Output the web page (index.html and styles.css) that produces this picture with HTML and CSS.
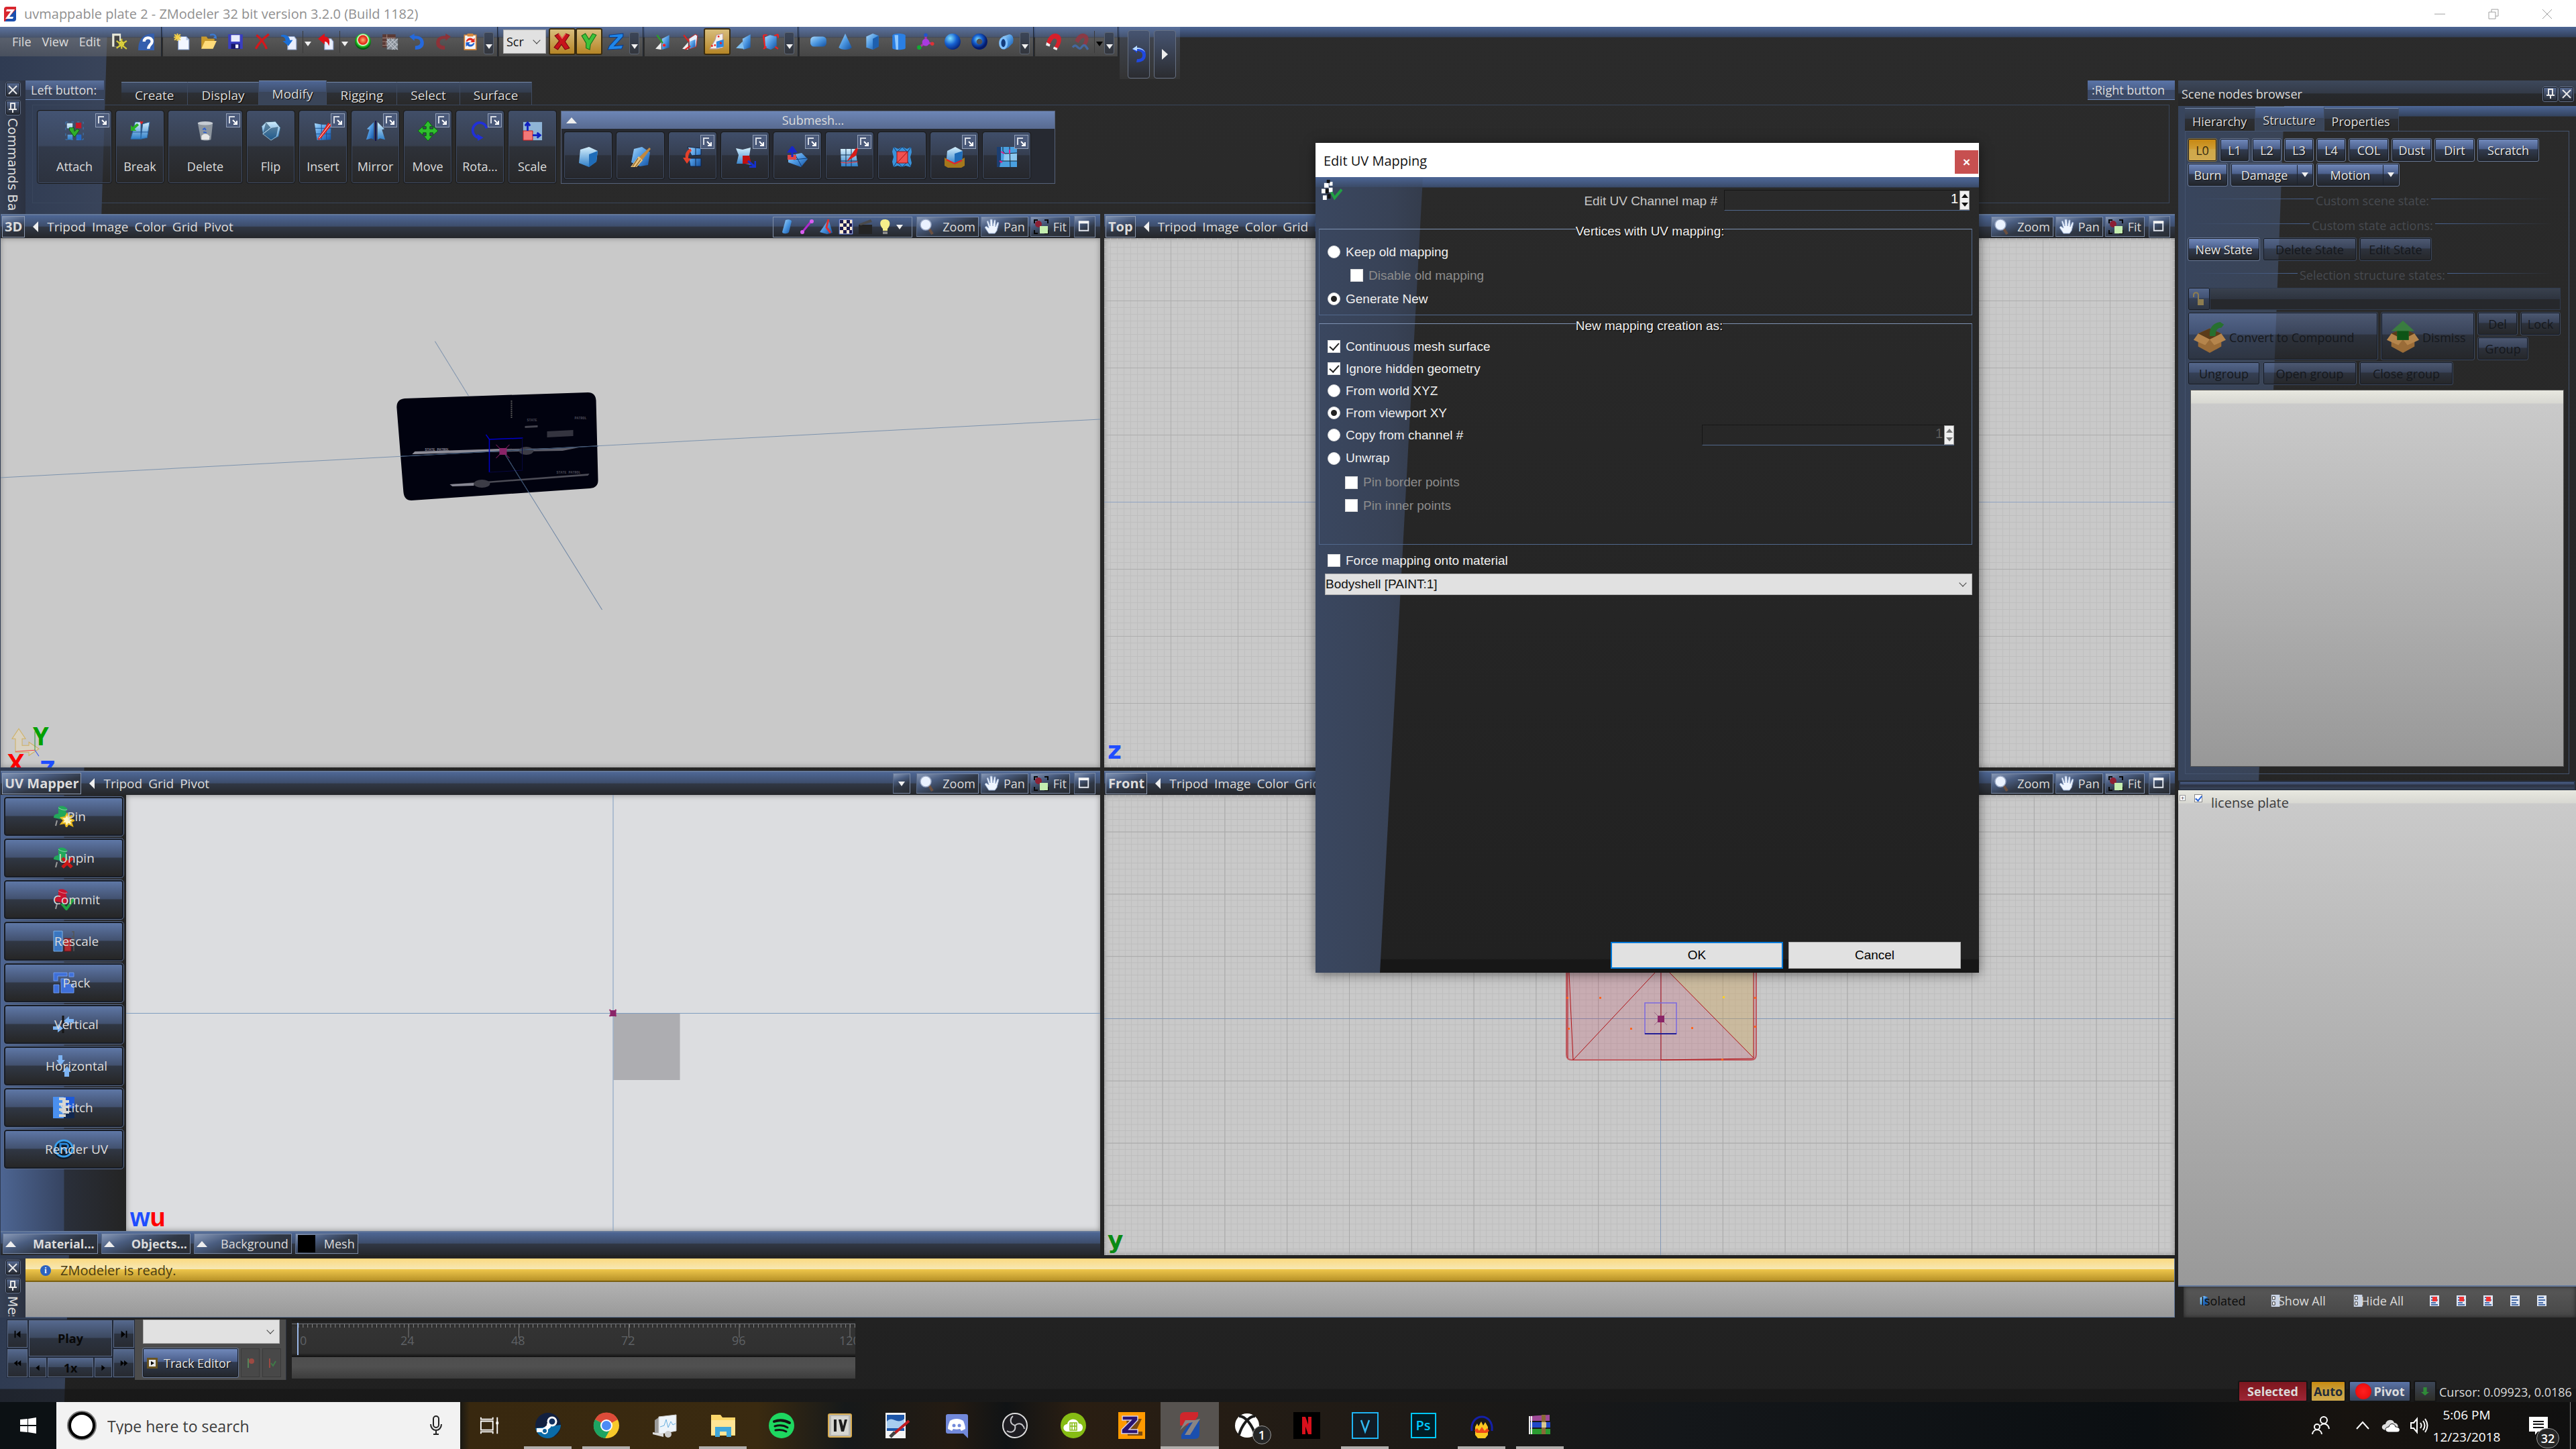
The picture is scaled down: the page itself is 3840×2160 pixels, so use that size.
FILE: index.html
```html
<!DOCTYPE html>
<html lang="en">
<head>
<meta charset="utf-8">
<title>uvmappable plate 2 - ZModeler</title>
<link rel="stylesheet" href="styles.css">
</head>
<body>
<svg class="defs" aria-hidden="true">
<defs>
<linearGradient id="gb" x1="0" y1="0" x2="1" y2="1"><stop offset="0" stop-color="#a8d8fb"/><stop offset=".5" stop-color="#4b96e0"/><stop offset="1" stop-color="#134f9e"/></linearGradient>
<linearGradient id="gl" x1="0" y1="0" x2="0" y2="1"><stop offset="0" stop-color="#d5effc"/><stop offset="1" stop-color="#2f7fc9"/></linearGradient>
<radialGradient id="gs" cx=".35" cy=".3" r=".8"><stop offset="0" stop-color="#7fe0ff"/><stop offset=".5" stop-color="#1660d0"/><stop offset="1" stop-color="#041a6a"/></radialGradient>
<radialGradient id="gball" cx=".5" cy=".4" r=".55"><stop offset="0" stop-color="#ffb070"/><stop offset=".5" stop-color="#e02010"/><stop offset=".6" stop-color="#e8ffe0"/><stop offset=".75" stop-color="#20c020"/><stop offset="1" stop-color="#005a10"/></radialGradient>
</defs>
<symbol id="zlogo" viewBox="0 0 24 24"><path d="M7 1h14v5L8 23H3V5q0-4 4-4z" fill="#d9262e"/><path d="M21 5v14q0 4-4 4H4L20 6z" fill="#1b4fae"/><path d="M7 5h12l-8 11h6l-1 3H5l8-11H6z" fill="#fff"/></symbol>
<symbol id="exit" viewBox="0 0 24 24"><path d="M2 1h12v18H2z" fill="#e8e8d8"/><path d="M5 4h7v15H5z" fill="#444"/><circle cx="15" cy="15" r="4" fill="#e6dc50" stroke="#6a6410"/><path d="M8 11l14 11M8 21l14-10M15 8v14" stroke="#d8cc3a" stroke-width="2"/></symbol>
<symbol id="help" viewBox="0 0 24 24"><path d="M1 24C1 8 8 1 23 1v23z" fill="#345fae"/><path d="M9 12c0-7 11-7 11 0 0 4-5 4-5 10" fill="none" stroke="#fff" stroke-width="4"/></symbol>
<symbol id="new" viewBox="0 0 24 24"><path d="M7 5h11l4 4v14H7z" fill="#f2f6ff" stroke="#7a93c4"/><path d="M18 5v5h4" fill="#b6c8e8"/><path d="M6 1v10M1 6h10M2 2l8 8M10 2l-8 8" stroke="#f4d048" stroke-width="2"/></symbol>
<symbol id="open" viewBox="0 0 24 24"><path d="M2 22V5h7l2 3h9v5" fill="#c99a2c"/><path d="M2 22l5-11h16l-5 11z" fill="#ffdc7a"/><path d="M14 3c5-2 8 0 8 4l-3-1" fill="none" stroke="#3a7bd5" stroke-width="2"/></symbol>
<symbol id="save" viewBox="0 0 24 24"><path d="M2 2h20v20H2z" fill="#3a3fc0"/><path d="M6 3h12v9H6z" fill="#e8ecfa"/><path d="M6 15h12v7H6z" fill="#16186a"/><path d="M12 16h4v5h-4z" fill="#fff"/></symbol>
<symbol id="del" viewBox="0 0 24 24"><path d="M4 3c6 5 11 11 14 19M21 2C13 8 7 14 3 22" fill="none" stroke="#d3181c" stroke-width="3"/></symbol>
<symbol id="import" viewBox="0 0 24 24"><path d="M10 5h9l3 4v14H10z" fill="#e8eefc" stroke="#8ea3cc"/><path d="M1 3c6-2 12 2 12 7h4l-6 8-8-7h4C7 7 5 5 1 5z" fill="#1c6fd6"/></symbol>
<symbol id="export" viewBox="0 0 24 24"><path d="M10 8h9l3 4v11H10z" fill="#e8eefc" stroke="#8ea3cc"/><path d="M1 8l9-7v4c6 0 8 5 6 13-2-5-3-6-6-6v4z" fill="#e01018"/></symbol>
<symbol id="ball" viewBox="0 0 24 24"><circle cx="12" cy="12" r="11" fill="url(#gball)"/></symbol>
<symbol id="wall" viewBox="0 0 24 24"><path d="M2 2h18v18H2z" fill="#5b3a35"/><path d="M2 7h18M2 12h18M2 17h18M8 2v5M14 7v5M7 12v5" stroke="#9a8078"/><path d="M8 8h15v15H8z" fill="#808890"/><path d="M8 12l4-4M8 18L18 8M9 22L23 8M15 23l8-8M8 12l11 11M8 8l15 15M14 8l9 9" stroke="#b8bec6" stroke-width="1.3"/></symbol>
<symbol id="undo" viewBox="0 0 24 24"><path d="M2 5l7-4v3c9 0 13 4 13 10s-5 9-12 9v-5c5 0 7-2 7-5 0-4-3-5-8-5v3z" fill="#2569dc"/></symbol>
<symbol id="undo2" viewBox="0 0 24 28"><path d="M2 6l7-5v3c9 0 13 4 13 11s-5 11-14 11l1-5c6 0 8-2 8-6s-3-6-8-6v3z" fill="#2048e0"/><path d="M2 6l7-5v3c6 0 10 3 12 7-3-4-7-5-12-5v3z" fill="#b8dcff"/></symbol>
<symbol id="redo" viewBox="0 0 24 24"><path d="M22 5l-7-4v3C6 4 2 8 2 14s5 9 12 9v-5c-5 0-7-2-7-5 0-4 3-5 8-5v3z" fill="#8c3238"/></symbol>
<symbol id="refresh" viewBox="0 0 24 24"><path d="M4 3h16v20H4z" fill="#f4f4f4" stroke="#d8893c" stroke-width="1.5"/><path d="M8 1h8v4H8z" fill="#d8893c"/><path d="M6 12c2-6 8-6 10-3l2-2v6h-6l2-2c-2-2-5-1-6 1z" fill="#e02a20"/><path d="M18 14c-2 6-8 6-10 3l-2 2v-6h6l-2 2c2 2 5 1 6-1z" fill="#2060d0"/></symbol>
<symbol id="ax" viewBox="0 0 24 24"><path d="M2 4l5-3 5 7 5-7 5 2-6 9 6 9-6 2-5-7-5 7-5-3 7-9z" fill="#c8141c" stroke="#7a0810"/><path d="M7 1l5 7 5-7" fill="none" stroke="#ff6a60"/></symbol>
<symbol id="ay" viewBox="0 0 24 24"><path d="M2 4l5-3 5 8 5-8 5 2-8 13-1 7-5-2v-7z" fill="#3fc23a" stroke="#157018"/></symbol>
<symbol id="az" viewBox="0 0 24 24"><path d="M3 3l19-2v4L10 18l12-1-2 5-19 1 2-5L14 6H3z" fill="#1f86ea" stroke="#0a3c8c"/></symbol>
<symbol id="mv" viewBox="0 0 24 24"><path d="M10 8l10-5v17l-10 3z" fill="url(#gb)"/><path d="M1 22l8-9v10z" fill="#eee"/><path d="M3 3l8 11" stroke="#2aa02a" stroke-width="2"/><circle cx="13" cy="17" r="2" fill="#f22"/></symbol>
<symbol id="me" viewBox="0 0 24 24"><path d="M10 8l9-6 3 2-2 15-9 3z" fill="#e7f1fb" stroke="#b33"/><path d="M11 12l8-3v10l-8 3z" fill="url(#gb)"/><path d="M1 22l8-9v10z" fill="#eee"/><path d="M3 3l7 9M5 23l7-5" stroke="#d22" stroke-width="2"/></symbol>
<symbol id="mf" viewBox="0 0 24 24"><path d="M9 10l2-7 9-2v19l-8 2H2z" fill="#f4f0ec" stroke="#b99"/><path d="M11 12l10-3v10l-10 2z" fill="#2f86dd"/><g fill="#e22"><circle cx="14" cy="5" r="1.3"/><circle cx="17" cy="14" r="1.5"/><circle cx="5" cy="18" r="1.3"/><circle cx="9" cy="17" r="1.3"/></g></symbol>
<symbol id="mo" viewBox="0 0 24 24"><path d="M10 8l11-6v18l-10 3z" fill="url(#gb)"/><path d="M1 21l9-9 2 10z" fill="#7fc0f2"/></symbol>
<symbol id="mb" viewBox="0 0 24 24"><path d="M4 6l7-3 9 2v14l-8 4-8-3z" fill="url(#gb)"/><path d="M2 3h5M2 3v5M22 2l-5 2M22 2v5M2 22l4-3M22 22l-4-3M2 4l2 16" stroke="#e22" stroke-width="2" fill="none"/></symbol>
<symbol id="pbox" viewBox="0 0 24 24"><rect x="1" y="5" width="22" height="14" rx="5" fill="url(#gb)"/></symbol>
<symbol id="pcone" viewBox="0 0 24 24"><path d="M12 1l9 19c-4 4-14 4-18 0z" fill="url(#gb)"/></symbol>
<symbol id="pcube" viewBox="0 0 24 24"><path d="M4 5l9-4 8 3v15l-8 4-9-3z" fill="url(#gb)"/><path d="M13 8l8-4v15l-8 4z" fill="#1d5fae"/></symbol>
<symbol id="pcyl" viewBox="0 0 24 24"><path d="M3 4c0-4 18-4 18 0v17c0 3-18 3-18 0z" fill="#2a7fe4"/><path d="M6 3h5v20H8z" fill="#8fc8ff"/></symbol>
<symbol id="pdummy" viewBox="0 0 24 24"><path d="M12 13V3M12 13l-9 7M12 13l9 2" stroke="#a3a" stroke-width="3"/><circle cx="12" cy="13" r="5" fill="#a93ae0"/><circle cx="12" cy="3" r="2.500" fill="#25c"/><circle cx="3" cy="20" r="3" fill="#1a3"/><circle cx="21" cy="15" r="2.500" fill="#d33"/></symbol>
<symbol id="psph" viewBox="0 0 24 24"><circle cx="12" cy="12" r="11" fill="url(#gs)"/></symbol>
<symbol id="ptor" viewBox="0 0 24 24"><circle cx="12" cy="12" r="7.500" fill="none" stroke="url(#gs)" stroke-width="7"/></symbol>
<symbol id="ptube" viewBox="0 0 24 24"><path d="M7 5l9-3c5 0 7 6 5 12l-6 6-6 3z" fill="url(#gb)"/><ellipse cx="8" cy="14" rx="4.500" ry="7" fill="#123a7a" stroke="#7fc0ff" stroke-width="3"/></symbol>
<symbol id="mag" viewBox="0 0 24 24"><path d="M2 13C5 3 12-1 18 2s5 12-1 20l-5-2c5-7 5-11 2-12s-5 3-8 9z" fill="#d8202a"/><path d="M2 13l-1 4 5 2 1-3zM12 19l5 2-1 3-5-2z" fill="#eee"/></symbol>
<symbol id="mag2" viewBox="0 0 24 24"><path d="M4 11C7 3 13-1 19 2s4 11-1 17l-4-2c4-6 4-9 2-10s-5 3-7 7z" fill="#8a3a46"/><path d="M1 20c5-8 8 6 12 0s6-2 9 3" fill="none" stroke="#45689e" stroke-width="3"/></symbol>
<symbol id="popup" viewBox="0 0 21 21"><rect x=".5" y=".5" width="20" height="20" fill="#4b5a7a" stroke="#93a0b8"/><path d="M5 15V5h8" fill="none" stroke="#d8dce4" stroke-width="2"/><path d="M10 10l6 6M16 11v5h-5" fill="none" stroke="#fff" stroke-width="2"/></symbol>
<symbol id="c1" viewBox="0 0 32 32"><path d="M4 4h9v8H4zM5 22h8v8H5z" fill="url(#gl)"/><path d="M18 3h9v9h-9z" fill="#c01828"/><path d="M19 22h8v9h-8z" fill="#2468c8"/><path d="M8 11h7l1 6 4-4 4 2-8 11-8-11z" fill="#2fae2a" stroke="#0c5a10"/><path d="M2 2h28v28H2z" fill="none" stroke="#3d7fc0" stroke-dasharray="4 5"/></symbol>
<symbol id="c2" viewBox="0 0 32 32"><path d="M8 2h9v27H1z" fill="url(#gl)" stroke="#2a6aa8"/><path d="M20 5l11-3-4 25-10 2z" fill="url(#gl)" stroke="#2a6aa8"/><path d="M3 18h26" stroke="#1b4f90"/><path d="M14 7L7 13l3 3H1V7l3 3 7-6z" fill="#28b024"/><path d="M16 1l2 3 2-3" stroke="#e22" stroke-width="2" fill="none"/></symbol>
<symbol id="c3" viewBox="0 0 32 32"><path d="M4 3h24l-3 27c-5 2-11 2-16 0z" fill="#8e969f"/><ellipse cx="16" cy="4" rx="12" ry="3" fill="#c6ccd3"/><path d="M10 24c4-5 10-4 13 1l-1 5H10z" fill="#e6e6e6"/><path d="M12 14l3-2 2 3M13 18l5 1" stroke="#2a5fd0" stroke-width="2" fill="none"/></symbol>
<symbol id="c4" viewBox="0 0 32 32"><path d="M8 2l15-1 8 10-3 14-12 6L3 21 1 9z" fill="url(#gl)" stroke="#33556e"/><path d="M16 11l12-2-3 16-9 6L3 21zM8 2l8 9L3 21" fill="#123a5a" fill-opacity=".55" stroke="#cfe8f6" stroke-opacity=".7"/></symbol>
<symbol id="c5" viewBox="0 0 32 32"><path d="M2 4l12 2h14v24L6 31z" fill="url(#gb)"/><path d="M3 12h25M4 21h24M13 4v26M21 5v25" stroke="#1a4d8c"/><path d="M8 30L25 4M11 27L28 6" stroke="#e0221c" stroke-width="3"/><path d="M9 28L27 5" stroke="#fff"/></symbol>
<symbol id="c6" viewBox="0 0 32 32"><path d="M13 2v28l-4-2-8 2 5-16-4-1z" fill="url(#gb)"/><path d="M19 2v28l4-2 8 2-5-16 4-1z" fill="url(#gl)"/><path d="M16 0v32" stroke="#101050" stroke-width="2"/></symbol>
<symbol id="c7" viewBox="0 0 32 32"><path d="M16 0l7 9h-4v4h5V9l8 7-8 7v-4h-5v5h4l-7 8-7-8h4v-5H8v4l-8-7 8-7v4h5V9H9z" fill="#2ec02c" stroke="#0a5c10"/></symbol>
<symbol id="c8" viewBox="0 0 32 32"><path d="M26 12C24 3 13 0 7 7s-3 17 6 20" fill="none" stroke="#2030d8" stroke-width="4"/><path d="M11 21l10 6-9 5z" fill="#2030d8"/></symbol>
<symbol id="c9" viewBox="0 0 32 32"><path d="M1 2h30v29H1z" fill="#8fb4d6"/><path d="M1 16h15v15H1z" fill="#f27878" stroke="#c01818"/><path d="M8 16V5M4 8l4-5 4 5M16 23h10M23 19l5 4-5 4" fill="none" stroke="#1020c0" stroke-width="3"/></symbol>
<symbol id="s1" viewBox="0 0 32 32"><path d="M4 5l13-4 13 6-2 16-11 8L2 25z" fill="url(#gl)"/><path d="M17 12l13-5-2 16-11 8z" fill="#1f6cb8"/></symbol>
<symbol id="s2" viewBox="0 0 32 32"><path d="M6 4l12-3 12 8-3 19-12 2L2 24z" fill="url(#gb)"/><path d="M29 2l2 2-13 17-5-4z" fill="#c08840"/><path d="M13 15l6 6-9 10H1z" fill="#e8c078"/><path d="M12 18L4 30M16 20l-8 11" stroke="#5a3810"/></symbol>
<symbol id="s3" viewBox="0 0 32 32"><path d="M8 1l20 2v10l-14 1zM10 18h18v12H12z" fill="url(#gb)" stroke="#124"/><path d="M12 3C5 8 4 12 5 17H1l6 9 6-8H9c0-6 2-9 5-11z" fill="#e4402a"/><path d="M20 3v10M20 18v12" stroke="#124"/></symbol>
<symbol id="s4" viewBox="0 0 32 32"><path d="M2 3l10 2 12-3-2 12 2 14-8-2H3l3-13z" fill="url(#gl)"/><path d="M12 14h10l3 12H12z" fill="#c01010"/><path d="M20 22l11 9M31 22v9h-9" stroke="#1530d0" stroke-width="3" fill="none"/></symbol>
<symbol id="s5" viewBox="0 0 32 32"><path d="M2 14l20-4 9 9-10 12L2 24z" fill="url(#gb)"/><path d="M10 20l20-2M12 12l10 18" stroke="#0f3c78"/><path d="M1 13h13v7H1z" fill="#e04848"/><path d="M8 16V6M3 8l5-7 5 7z" stroke="#1828c8" stroke-width="3" fill="#1828c8"/></symbol>
<symbol id="s6" viewBox="0 0 32 32"><path d="M2 4h22l4 26H3z" fill="url(#gl)"/><path d="M2 13h24M2 22h25M10 4v26M18 4v26" stroke="#135"/><path d="M24 4l5-3-4 13-14 9z" fill="#d81c18"/><path d="M2 24l10 1 16-2" stroke="#e22" fill="none"/></symbol>
<symbol id="s7" viewBox="0 0 32 32"><path d="M3 1l7 3 6-3 7 3 6-3 1 8-2 7 2 9-2 6-7-2-5 2-7-2-6 2-2-8 2-7-2-8z" fill="#3a92da"/><path d="M3 1l5 8 8-8 8 8 5-8M3 31l5-8 8 8 8-8 5 8" stroke="#123c70" fill="none"/><path d="M8 8h16v17H8z" fill="#f05050" stroke="#a01010"/><path d="M8 25L24 8" stroke="#a01010"/></symbol>
<symbol id="s8" viewBox="0 0 32 32"><path d="M1 17l15 8 15-8v12l-5 3H6l-5-3z" fill="#a5781c"/><path d="M5 7l12-6 11 6-1 15-11 5L4 19z" fill="url(#gl)"/><path d="M16 11l12-4-1 15-11 5z" fill="#1f6cb8"/><path d="M4 20l12 6 11-5" stroke="#e22" stroke-width="2" fill="none"/></symbol>
<symbol id="s9" viewBox="0 0 32 32"><path d="M1 1h30v30H1z" fill="#4aa0e0"/><path d="M1 1h6v21l-2 9H1z" fill="#1c3f72"/><path d="M12 11l19-1v12H11z" fill="#8cc8f0"/><path d="M10 1v6l3 4 18-1M20 1l1 30M7 22h24" stroke="#123" fill="none"/><path d="M7 8l5 3M5 22l4 2M20 5v6" stroke="#e0208a" stroke-width="2"/></symbol>
<symbol id="v1" viewBox="0 0 24 24"><path d="M9 2c5-2 9 0 9 2l-4 16c-2 3-9 3-10 0z" fill="url(#gb)"/></symbol>
<symbol id="v2" viewBox="0 0 24 24"><path d="M5 20L19 3" stroke="#b02ad0" stroke-width="3"/><circle cx="19" cy="4" r="3" fill="#d860f0"/><circle cx="5" cy="20" r="3" fill="#d860f0"/></symbol>
<symbol id="v3" viewBox="0 0 24 24"><path d="M15 1l6 20-8 2-11-3z" fill="url(#gb)"/><path d="M15 1l-3 12 6 8" stroke="#e03030" stroke-width="3" fill="none"/></symbol>
<symbol id="v4" viewBox="0 0 24 24"><path d="M2 1h20v22H2z" fill="#f8e8d0" stroke="#3a5ac0"/><path d="M3 2h5v5H3zM13 2h5v5h-5zM8 7h5v5H8zM17 7h4v5h-4zM3 12h5v5H3zM13 12h5v5h-5zM8 17h5v5H8zM17 17h4v5h-4z" fill="#1c1a50"/></symbol>
<symbol id="v5" viewBox="0 0 24 24"><path d="M2 9h20v14H2z" fill="#242424"/><path d="M2 8l18-7 2 4-17 5z" fill="#4a4a4a"/></symbol>
<symbol id="v6" viewBox="0 0 24 24"><path d="M12 1c9 0 9 9 4 14v3H9v-3C3 9 4 1 12 1z" fill="#f5ee8a"/><path d="M9 19h7v4H9z" fill="#888"/></symbol>
<symbol id="zoom" viewBox="0 0 24 24"><path d="M15 15l5 8" stroke="#6b5040" stroke-width="4"/><circle cx="10" cy="9" r="8" fill="#eaf2ff" stroke="#9aa8c4" stroke-width="1.500"/></symbol>
<symbol id="hand" viewBox="0 0 24 24"><path d="M8 22l-6-9 2-2 4 3L5 4l2-1 3 8V1h3l1 10 2-9h2v10l3-7 2 1-3 12-3 4z" fill="#eef5ff" stroke="#8fa4c8"/></symbol>
<symbol id="fit" viewBox="0 0 24 24"><path d="M2 7V2h5M17 2h5v5M2 17v5h5M17 22h5v-5" stroke="#080808" stroke-width="2" fill="none"/><circle cx="8" cy="8" r="5" fill="#8c2034"/><path d="M10 11h12v11H10z" fill="#c4eeb0"/></symbol>
<symbol id="max" viewBox="0 0 24 24"><path d="M4 4h14v14H4z" fill="none" stroke="#e4e8f0" stroke-width="2"/><path d="M3 3h16v4H3z" fill="#f4f4f4"/></symbol>
<symbol id="pin" viewBox="0 0 32 32"><path d="M8 2c4-3 12-1 14 4l-3 1 2 8c2 3 1 6-1 7L1 18c0-4 3-6 7-6V6z" fill="currentColor"/><path d="M8 3c4 3 9 4 13 3" stroke="#fff" stroke-opacity=".5" fill="none"/><path d="M6 22l-2 8" stroke="#999" stroke-width="2"/></symbol>
<symbol id="u1" viewBox="0 0 32 32"><use href="#pin" color="#22a85a"/><path d="M21 12l2 5 5-2-2 5 6 2-5 2 2 6-6-3-3 5-2-6-6 1 4-5-4-4 6-1z" fill="#fff6c0" stroke="#e8b81c" stroke-width="2"/></symbol>
<symbol id="u2" viewBox="0 0 32 32"><use href="#pin" color="#22a85a"/><path d="M14 16l14 14M29 16L14 30" stroke="#cc1818" stroke-width="5"/></symbol>
<symbol id="u3" viewBox="0 0 32 32"><use href="#pin" color="#c81430"/><path d="M13 22l7 8L31 15" stroke="#20a440" stroke-width="4" fill="none"/></symbol>
<symbol id="u4" viewBox="0 0 32 32"><path d="M1 1h13v30H1z" fill="#3a76c0" stroke="#79b0ea"/><path d="M17 12h10v19H17z" fill="#b02a30" stroke="#681016"/><path d="M31 1v30M28 2h3M28 9h3M28 16h3M28 23h3" stroke="#555" stroke-width="1.500"/></symbol>
<symbol id="u5" viewBox="0 0 32 32"><path d="M1 1h20v5H7v7H1zM24 1h7v6h-7zM1 19h8v12H1zM12 10h9v8h10v13H12z" fill="#3f70d8" stroke="#6c98f0"/></symbol>
<symbol id="u6" viewBox="0 0 32 32"><path d="M15 3v26" stroke="#151515" stroke-width="3"/><path d="M31 8H24V4l-8 7 8 6v-4h7zM0 19h7v-4l8 7-8 6v-4H0z" fill="#7db4f4"/></symbol>
<symbol id="u7" viewBox="0 0 32 32"><path d="M8 0h6v7h4l-7 9-6-9h3zM17 32h7v-7h3l-6-9-7 9h3z" fill="#7db4f4"/></symbol>
<symbol id="u8" viewBox="0 0 32 32"><path d="M0 0h16v32H0z" fill="#4a90f0"/><path d="M16 0h16v17H16z" fill="#1f5ad8"/><path d="M16 17h16v15H16z" fill="#12284f"/><path d="M9 3h10M14 7h10M9 11h10M14 15h10M9 19h10M14 23h10M9 28h10" stroke="#d5d5d0" stroke-width="4"/></symbol>
<symbol id="u9" viewBox="0 0 32 32"><ellipse cx="16" cy="17" rx="15" ry="14" fill="#0d1c2c"/><ellipse cx="16" cy="15" rx="13" ry="12" fill="none" stroke="#3aa0ee" stroke-width="3"/><path d="M11 22V8h7c6 0 6 7 0 7h-7 5l6 7" fill="none" stroke="#2a86d8" stroke-width="3"/></symbol>
<symbol id="crate" viewBox="0 0 52 52"><path d="M8 20l18-8 18 8v20l-18 10L8 40z" fill="#9a6c38"/><path d="M8 20l18 9 18-9-18-8z" fill="#5a3c1a"/><path d="M8 20l-7 10 18 8 7-9zM44 20l7 10-18 8-7-9z" fill="#b5854c"/></symbol>
<symbol id="crate1" viewBox="0 0 52 52"><use href="#crate"/><path d="M26 24c-1-12 4-20 16-22l6 4-4 5c-6 0-9 4-9 13z" fill="#27702f"/></symbol>
<symbol id="crate2" viewBox="0 0 52 52"><use href="#crate"/><path d="M17 30V16H8L26 0l18 16h-9v14z" fill="#3a7c40"/><path d="M17 30V16h18v14z" fill="#0e5416"/></symbol>
<symbol id="lock" viewBox="0 0 24 24"><path d="M10 12h9v9h-9z" fill="#8c7c50"/><path d="M11 12V6c0-5-7-5-7 0v3" fill="none" stroke="#8c7c50" stroke-width="2"/></symbol>
<symbol id="list" viewBox="0 0 16 18"><path d="M1 1h14v16H1z" fill="#dfe6f2"/><path d="M3 4h8M3 8h10M3 12h7M3 15h10" stroke="#4a6ea8" stroke-width="2"/></symbol>
<symbol id="chk" viewBox="0 0 16 20"><path d="M0 0h14v20H0z" fill="#c9d4e6"/><path d="M2 3h4v5H2zM2 12h4v5H2z" fill="#fff" stroke="#222"/></symbol>
<symbol id="people" viewBox="0 0 28 28"><g fill="none" stroke="#fff" stroke-width="2"><circle cx="18" cy="6" r="5"/><circle cx="8" cy="16" r="4"/><path d="M1 27c1-9 13-9 14 0M13 14c5-5 12-2 13 5"/></g></symbol>
</svg>

<div class="app">
<header class="titlebar"><svg class="i24"><use href="#zlogo"/></svg><h1>uvmappable plate 2 - ZModeler 32 bit version 3.2.0 (Build 1182)</h1>
<div class="winctl"><button aria-label="Minimize"><svg viewBox="0 0 16 16"><path d="M0 8h16"/></svg></button><button aria-label="Restore"><svg viewBox="0 0 16 16"><path d="M1 5h10v10H1zM5 5V1h10v10h-4"/></svg></button><button aria-label="Close"><svg viewBox="0 0 16 16"><path d="M1 1l14 14M15 1L1 15"/></svg></button></div></header>

<div class="work">
<nav class="toolbars" aria-label="Toolbars">
<div class="tg menus"><button>File</button><button>View</button><button>Edit</button><button class="tb" aria-label="Exit"><svg><use href="#exit"/></svg></button><button class="tb" aria-label="Help"><svg><use href="#help"/></svg></button></div>
<div class="tg"><button class="tb" aria-label="New"><svg><use href="#new"/></svg></button><button class="tb" aria-label="Open"><svg><use href="#open"/></svg></button><button class="tb" aria-label="Save"><svg><use href="#save"/></svg></button><button class="tb" aria-label="Delete"><svg><use href="#del"/></svg></button><button class="tb" aria-label="Import"><svg><use href="#import"/></svg></button><button class="dd" aria-label="Import options"></button><button class="tb" aria-label="Export"><svg><use href="#export"/></svg></button><button class="dd" aria-label="Export options"></button><button class="tb" aria-label="Materials"><svg><use href="#ball"/></svg></button><button class="tb" aria-label="Textures"><svg><use href="#wall"/></svg></button><button class="tb" aria-label="Undo"><svg><use href="#undo"/></svg></button><button class="tb" aria-label="Redo"><svg><use href="#redo"/></svg></button><button class="tb" aria-label="Refresh"><svg><use href="#refresh"/></svg></button><button class="more" aria-label="More"></button></div>
<div class="tg"><div class="combo scr"><select aria-label="Axes space"><option>Scr</option></select></div><button class="tb on" aria-label="X axis"><svg><use href="#ax"/></svg></button><button class="tb on" aria-label="Y axis"><svg><use href="#ay"/></svg></button><button class="tb" aria-label="Z axis"><svg><use href="#az"/></svg></button><button class="more" aria-label="More"></button></div>
<div class="tg"><button class="tb" aria-label="Vertices"><svg><use href="#mv"/></svg></button><button class="tb" aria-label="Edges"><svg><use href="#me"/></svg></button><button class="tb on" aria-label="Polygons"><svg><use href="#mf"/></svg></button><button class="tb" aria-label="Objects"><svg><use href="#mo"/></svg></button><button class="tb" aria-label="Bounds"><svg><use href="#mb"/></svg></button><button class="more" aria-label="More"></button></div>
<div class="tg"><button class="tb" aria-label="Box"><svg><use href="#pbox"/></svg></button><button class="tb" aria-label="Cone"><svg><use href="#pcone"/></svg></button><button class="tb" aria-label="Cube"><svg><use href="#pcube"/></svg></button><button class="tb" aria-label="Cylinder"><svg><use href="#pcyl"/></svg></button><button class="tb" aria-label="Dummy"><svg><use href="#pdummy"/></svg></button><button class="tb" aria-label="Sphere"><svg><use href="#psph"/></svg></button><button class="tb" aria-label="Torus"><svg><use href="#ptor"/></svg></button><button class="tb" aria-label="Tube"><svg><use href="#ptube"/></svg></button><button class="more" aria-label="More"></button></div>
<div class="tg"><button class="tb" aria-label="Magnet"><svg><use href="#mag"/></svg></button><button class="tb" aria-label="Soft magnet"><svg><use href="#mag2"/></svg></button><button class="dd black" aria-label="Magnet options"></button><button class="more" aria-label="More"></button></div>
<div class="tg tall"><button class="tbtall" aria-label="Undo last"><svg><use href="#undo2"/></svg></button><button class="tbtall" aria-label="Repeat"><span class="tri-r"></span></button></div>
</nav>

<main class="center">
<section class="cmdbar">
<div class="vstrip"><button class="sq" aria-label="Close"><svg viewBox="0 0 16 16"><path d="M2 2l12 12M14 2L2 14"/></svg></button><button class="sq" aria-label="Pin"><svg viewBox="0 0 16 16"><path d="M5 1h6v9H5zM2 10h12M8 10v5"/></svg></button><span class="vtext">Commands Ba</span></div>
<div class="cmdmain">
<div class="tabrow"><span class="mbtn">Left button:</span><div class="tabs"><button class="tab">Create</button><button class="tab">Display</button><button class="tab sel">Modify</button><button class="tab">Rigging</button><button class="tab">Select</button><button class="tab">Surface</button></div><span class="mbtn right">:Right button</span></div>
<div class="cmdpanel">
<button class="cmd wide"><svg class="ci"><use href="#c1"/></svg><svg class="pop"><use href="#popup"/></svg>Attach</button>
<button class="cmd"><svg class="ci"><use href="#c2"/></svg>Break</button>
<button class="cmd wide"><svg class="ci"><use href="#c3"/></svg><svg class="pop"><use href="#popup"/></svg>Delete</button>
<button class="cmd"><svg class="ci"><use href="#c4"/></svg>Flip</button>
<button class="cmd"><svg class="ci"><use href="#c5"/></svg><svg class="pop"><use href="#popup"/></svg>Insert</button>
<button class="cmd"><svg class="ci"><use href="#c6"/></svg><svg class="pop"><use href="#popup"/></svg>Mirror</button>
<button class="cmd"><svg class="ci"><use href="#c7"/></svg><svg class="pop"><use href="#popup"/></svg>Move</button>
<button class="cmd"><svg class="ci"><use href="#c8"/></svg><svg class="pop"><use href="#popup"/></svg>Rota...</button>
<button class="cmd"><svg class="ci"><use href="#c9"/></svg>Scale</button>
<div class="submesh"><div class="subhead"><span class="tri-u"></span><span class="subt">Submesh...</span></div><div class="subrow">
<button class="cmd sm" aria-label="Solid"><svg class="ci"><use href="#s1"/></svg></button>
<button class="cmd sm" aria-label="Clean"><svg class="ci"><use href="#s2"/></svg></button>
<button class="cmd sm" aria-label="Detach"><svg class="ci"><use href="#s3"/></svg><svg class="pop"><use href="#popup"/></svg></button>
<button class="cmd sm" aria-label="Bevel"><svg class="ci"><use href="#s4"/></svg><svg class="pop"><use href="#popup"/></svg></button>
<button class="cmd sm" aria-label="Extrude"><svg class="ci"><use href="#s5"/></svg><svg class="pop"><use href="#popup"/></svg></button>
<button class="cmd sm" aria-label="Cut"><svg class="ci"><use href="#s6"/></svg><svg class="pop"><use href="#popup"/></svg></button>
<button class="cmd sm" aria-label="Inset"><svg class="ci"><use href="#s7"/></svg></button>
<button class="cmd sm" aria-label="Slice"><svg class="ci"><use href="#s8"/></svg><svg class="pop"><use href="#popup"/></svg></button>
<button class="cmd sm" aria-label="Weld"><svg class="ci"><use href="#s9"/></svg><svg class="pop"><use href="#popup"/></svg></button>
</div></div>
</div></div>
</section>

<div class="views">
<section class="view">
<header class="vhead"><button class="vname">3D</button><div class="vmenu"><span class="tri-l"></span><button>Tripod</button><button>Image</button><button>Color</button><button>Grid</button><button>Pivot</button></div>
<div class="vicons"><svg><use href="#v1"/></svg><svg><use href="#v2"/></svg><svg><use href="#v3"/></svg><svg><use href="#v4"/></svg><svg><use href="#v5"/></svg><svg><use href="#v6"/></svg><span class="tri-d"></span></div>
<div class="vtools"><button class="vb vz"><svg><use href="#zoom"/></svg>Zoom</button><button class="vb"><svg><use href="#hand"/></svg>Pan</button><button class="vb"><svg><use href="#fit"/></svg>Fit</button><button class="vb vmax" aria-label="Maximize"><svg><use href="#max"/></svg></button></div></header>
<div class="canvas">
<svg class="scene" viewBox="0 0 1638 789" preserveAspectRatio="xMidYMid slice">
<path d="M647 154l50 81" stroke="#7f93ad" fill="none"/>
<path d="M590 252q0-12 12-13l273-9q11 0 12 12l3 119q0 11-12 12l-266 18q-11 0-12-13z" fill="#01020f"/>
<path d="M614 322l3-3 140-5 70-1 40-2-30 6-170 3z" fill="#5d5d68"/><path d="M613 322l4-4 132-4v4z" fill="#8d8d98"/>
<path d="M669 367l208-16-2 3-202 15z" fill="#4c4c56"/><path d="M669 367l36-2v4l-32 1z" fill="#888894"/>
<ellipse cx="783" cy="317" rx="11" ry="6" fill="#3c3c46"/><ellipse cx="717" cy="366" rx="12" ry="6" fill="#3c3c46"/>
<path d="M814 288l39-2v9l-39 2z" fill="#34343f"/><path d="M781 280l19-1v3l-19 1z" fill="#44444f"/>
<path d="M761 242v27" stroke="#555" stroke-width="2" stroke-dasharray="2 1"/>
<g class="platetext"><text x="632" y="317">STATE PATROL</text><text class="dim" x="828" y="351">STATE PATROL</text><text class="dim" x="784" y="273">STATE</text><text class="dim" x="855" y="270">PATROL</text></g>
<path d="M0 357l1638-87" stroke="#7d93ad" fill="none"/>
<path d="M597 325l293-15" stroke="#2c415f" fill="none"/>
<path d="M728 349v-49l50-2M728 300l-5-7" stroke="#0000c8" stroke-width="1.500" fill="none"/><path d="M777 298v47M728 349l50-3" stroke="#080840" fill="none"/>
<path d="M750 320l146 234" stroke="#6f86a4" fill="none"/><path d="M750 320l36 58" stroke="#2c415f" fill="none"/>
<path d="M738 308l20 20M758 308l-20 20" stroke="#6d1c54"/><path d="M743 313h11v10h-11z" fill="#8a2468"/>
<path d="M27 731l10 15h-5v10h10v-5l15 10-15 10v-5H22v-20h-5z" fill="#d9d2c2" stroke="#cfb060"/>
<path d="M22 765l29-2" stroke="#f04040"/><path d="M51 763v-28" stroke="#2a9a3a"/><path d="M51 763l6 9" stroke="#3050f0"/>
<g class="axis"><text x="48" y="756" fill="#00a000">Y</text><text x="10" y="796" fill="#f00">X</text><text x="59" y="806" fill="#1f4dff">Z</text></g>
</svg></div>
</section>

<section class="view">
<header class="vhead"><button class="vname">Top</button><div class="vmenu"><span class="tri-l"></span><button>Tripod</button><button>Image</button><button>Color</button><button>Grid</button><button>Pivot</button></div>
<div class="vtools"><button class="vb vz"><svg><use href="#zoom"/></svg>Zoom</button><button class="vb"><svg><use href="#hand"/></svg>Pan</button><button class="vb"><svg><use href="#fit"/></svg>Fit</button><button class="vb vmax" aria-label="Maximize"><svg><use href="#max"/></svg></button></div></header>
<div class="canvas">
<svg class="scene"><defs><pattern id="g1" width="10" height="10" x="9" y="3" patternUnits="userSpaceOnUse"><path d="M.5 0v10M0 .5h10" stroke="#bfbfbf"/></pattern><pattern id="g10" width="100" height="100" x="99" y="93" patternUnits="userSpaceOnUse"><path d="M.5 0v100M0 .5h100" stroke="#adadad"/></pattern></defs>
<rect width="100%" height="100%" fill="url(#g1)"/><rect width="100%" height="100%" fill="url(#g10)"/><path d="M0 393.500h4000M799.500 0v800" stroke="#8fa2c0"/></svg>
<span class="axl z">z</span></div>
</section>

<section class="view">
<header class="vhead"><button class="vname">UV Mapper</button><div class="vmenu"><span class="tri-l"></span><button>Tripod</button><button>Grid</button><button>Pivot</button></div>
<div class="vtools"><button class="vb drop" aria-label="Options"><span class="tri-d"></span></button><button class="vb vz"><svg><use href="#zoom"/></svg>Zoom</button><button class="vb"><svg><use href="#hand"/></svg>Pan</button><button class="vb"><svg><use href="#fit"/></svg>Fit</button><button class="vb vmax" aria-label="Maximize"><svg><use href="#max"/></svg></button></div></header>
<div class="uvbody">
<div class="uvtools"><button class="ub"><svg><use href="#u1"/></svg><span>Pin</span></button><button class="ub"><svg><use href="#u2"/></svg><span>Unpin</span></button><button class="ub"><svg><use href="#u3"/></svg><span>Commit</span></button><button class="ub"><svg><use href="#u4"/></svg><span>Rescale</span></button><button class="ub"><svg><use href="#u5"/></svg><span>Pack</span></button><button class="ub"><svg><use href="#u6"/></svg><span>Vertical</span></button><button class="ub"><svg><use href="#u7"/></svg><span>Horizontal</span></button><button class="ub"><svg><use href="#u8"/></svg><span>Stitch</span></button><button class="ub"><svg><use href="#u9"/></svg><span>Render UV</span></button></div>
<div class="canvas uv"><svg class="scene" viewBox="0 0 1451 650" preserveAspectRatio="xMidYMid slice"><path d="M726 326h99v99h-99z" fill="#adadb1"/><path d="M-200 325.500h2000M725.500-200v1200" stroke="#7f9dc0" fill="none"/><path d="M720 320l10 10M730 320l-10 10" stroke="#a03070" stroke-width="2"/><path d="M721 321h9v9h-9z" fill="#8a2468"/></svg><span class="axl wu"><b>w</b><b>u</b></span></div>
</div>
<footer class="uvfoot"><button class="vb bold"><span class="tri-u"></span>Material...</button><button class="vb bold"><span class="tri-u"></span>Objects...</button><button class="vb"><span class="tri-u"></span>Background</button><button class="vb"><span class="swatch"></span>Mesh</button></footer>
</section>

<section class="view">
<header class="vhead"><button class="vname">Front</button><div class="vmenu"><span class="tri-l"></span><button>Tripod</button><button>Image</button><button>Color</button><button>Grid</button><button>Pivot</button></div>
<div class="vtools"><button class="vb vz"><svg><use href="#zoom"/></svg>Zoom</button><button class="vb"><svg><use href="#hand"/></svg>Pan</button><button class="vb"><svg><use href="#fit"/></svg>Fit</button><button class="vb vmax" aria-label="Maximize"><svg><use href="#max"/></svg></button></div></header>
<div class="canvas">
<svg class="scene"><defs><pattern id="f1" width="9.280" height="9.280" x="829" y="333" patternUnits="userSpaceOnUse"><path d="M.5 0v10M0 .5h10" stroke="#bdbdbd"/></pattern><pattern id="f10" width="92.800" height="92.800" x="829" y="333" patternUnits="userSpaceOnUse"><path d="M.5 0v93M0 .5h93" stroke="#a8a8a8"/></pattern></defs>
<rect width="100%" height="100%" fill="url(#f1)"/><rect width="100%" height="100%" fill="url(#f10)"/><path d="M0 333.500h4000M829.500 0v800" stroke="#8297b5"/>
<g transform="translate(2 0)"><path d="M687 200h283v187q0 8-8 8H695q-8 0-8-8z" fill="#c80028" fill-opacity=".14" stroke="#c05a60" stroke-width="2"/>
<path d="M836 260l130 132V200z" fill="#d0dc70" fill-opacity=".3"/>
<path d="M689 200v192M691 265l6 130 122-130M836 260l130 132M828 265v130M966 200v192M828 395l138-2" stroke="#b01014" fill="none"/>
<path d="M804 310h47v46h-47z" fill="none" stroke="#7a68e0" stroke-width="1.500"/><path d="M804 356h47" stroke="#000080" stroke-width="1.500"/>
<path d="M818 324l19 19M837 324l-19 19" stroke="#a06a88"/><path d="M823 329h10v10h-10z" fill="#8a2468"/>
<g fill="#ff6420"><path d="M736 301h3v3h-3zM782 347h3v3h-3zM873 346h3v3h-3zM687 301h3v3h-3zM689 347h3v3h-3zM967 301h3v3h-3zM967 344h3v3h-3zM918 393h3v3h-3z"/></g><path d="M920 300h3v3h-3z" fill="#ffd020"/></g></svg>
<span class="axl y">y</span></div>
</section>
</div>

<section class="messages"><div class="vstrip"><button class="sq" aria-label="Close"><svg viewBox="0 0 16 16"><path d="M2 2l12 12M14 2L2 14"/></svg></button><button class="sq" aria-label="Pin"><svg viewBox="0 0 16 16"><path d="M5 1h6v9H5zM2 10h12M8 10v5"/></svg></button><span class="vtext">Mes</span></div>
<div class="msgbox"><p><span class="info">i</span>ZModeler is ready.</p></div></section>
</main>

<aside class="side">
<h2 class="sidetitle">Scene nodes browser<span><button class="sq" aria-label="Pin"><svg viewBox="0 0 16 16"><path d="M5 1h6v9H5zM2 10h12M8 10v5"/></svg></button><button class="sq" aria-label="Close"><svg viewBox="0 0 16 16"><path d="M2 2l12 12M14 2L2 14"/></svg></button></span></h2>
<div class="sidebody">
<div class="tabs"><button class="tab">Hierarchy</button><button class="tab sel">Structure</button><button class="tab">Properties</button></div>
<div class="struct">
<div class="row"><button class="sb w1 act">L0</button><button class="sb w1">L1</button><button class="sb w1">L2</button><button class="sb w1">L3</button><button class="sb w1">L4</button><button class="sb w2">COL</button><button class="sb w2">Dust</button><button class="sb w2">Dirt</button><button class="sb w3">Scratch</button></div>
<div class="row"><button class="sb w2">Burn</button><button class="sb w4 split"><span>Damage</span><i class="tri-d"></i></button><button class="sb w4 split"><span>Motion</span><i class="tri-d"></i></button></div>
<div class="sep">Custom scene state:</div>
<div class="sep">Custom state actions:</div>
<div class="row"><button class="sb w5">New State</button><button class="sb w6" disabled>Delete State</button><button class="sb w5" disabled>Edit State</button></div>
<div class="sep">Selection structure states:</div>
<div class="row strip"><button class="sb lockb" disabled aria-label="Lock state"><svg class="i24"><use href="#lock"/></svg></button><span></span></div>
<div class="row"><button class="sb w8 big" disabled><svg><use href="#crate1"/></svg>Convert to Compound</button><button class="sb w6 big" disabled><svg><use href="#crate2"/></svg>Dismiss</button><div class="mini"><button class="sb w2" disabled>Del</button><button class="sb w2" disabled>Lock</button><button class="sb w7" disabled>Group</button></div></div>
<div class="row"><button class="sb w5" disabled>Ungroup</button><button class="sb w6" disabled>Open group</button><button class="sb w6" disabled>Close group</button></div>
<div class="well"></div>
</div></div>
<div class="splitter"></div>
<div class="nodes"><label><span class="plus">+</span><input type="checkbox" checked><span>license plate</span></label></div>
<footer class="sidefoot"><button class="off"><svg viewBox="0 0 24 24"><use href="#pcube"/></svg>Isolated</button><button><svg><use href="#chk"/></svg>Show All</button><button class="hide"><svg><use href="#chk"/></svg>Hide All</button><button class="ic r1" aria-label="Move up"><svg><use href="#list"/></svg></button><button class="ic r1" aria-label="Move down"><svg><use href="#list"/></svg></button><button class="ic r1" aria-label="Move to"><svg><use href="#list"/></svg></button><button class="ic" aria-label="Expand"><svg><use href="#list"/></svg></button><button class="ic" aria-label="Collapse"><svg><use href="#list"/></svg></button></footer>
</aside>

<footer class="bottom">
<div class="player"><button class="pb a" aria-label="First"><svg viewBox="0 0 16 16"><path d="M3 2h2v12H3zM13 2v12L6 8z"/></svg></button><button class="pb b">Play</button><button class="pb c" aria-label="Last"><svg viewBox="0 0 16 16"><path d="M11 2h2v12h-2zM3 2v12l7-6z"/></svg></button><button class="pb d" aria-label="Slower"><svg viewBox="0 0 16 16"><path d="M8 3v10L2 8zM14 3v10L8 8z"/></svg></button><button class="pb e" aria-label="Previous"><svg viewBox="0 0 16 16"><path d="M11 3v10L5 8z"/></svg></button><button class="pb f">1x</button><button class="pb g" aria-label="Next"><svg viewBox="0 0 16 16"><path d="M5 3v10l6-5z"/></svg></button><button class="pb h" aria-label="Faster"><svg viewBox="0 0 16 16"><path d="M2 3v10l6-5zM8 3v10l6-5z"/></svg></button></div>
<div class="tracks"><div class="combo"><select aria-label="Animation"><option></option></select></div><div class="trow"><button class="sb te"><svg viewBox="0 0 16 16"><path d="M0 0h16v16H0z" fill="#6a5420"/><path d="M3 3h10v10H3z" fill="#e8e8e8"/><path d="M6 5l5 3-5 3z"/></svg>Track Editor</button><button class="mk" aria-label="Add key"><svg viewBox="0 0 16 16"><path d="M5 1v14" stroke="#56845a" stroke-width="2"/><circle cx="10" cy="5" r="4" fill="#9c4a42"/></svg></button><button class="mk" aria-label="Apply key"><svg viewBox="0 0 16 16"><path d="M5 1v14" stroke="#9c4a42" stroke-width="2"/><path d="M7 8l3 4 4-7" stroke="#3f7a48" stroke-width="2" fill="none"/></svg></button></div></div>
<div class="timeline"><svg class="ruler"><defs><pattern id="tick" width="6.854" height="12" x="9.500" y="7" patternUnits="userSpaceOnUse"><path d="M.5 0v5" stroke="#8a8a8a"/></pattern></defs><path d="M0 6.500h840" stroke="#6f7278"/><rect x="9" y="7" width="831" height="12" fill="url(#tick)"/><path d="M174 7v20M338.500 7v20M502.500 7v20M667 7v20M832 7v20" stroke="#7a7a7a"/><path d="M9 5v48" stroke="#9ab8e8" stroke-width="2"/><g><text x="12" y="38">0</text><text x="162" y="38">24</text><text x="327" y="38">48</text><text x="491" y="38">72</text><text x="656" y="38">96</text><text x="816" y="38">120</text></g></svg></div>
<div class="status"><button class="st red">Selected</button><button class="st gold">Auto</button><button class="st blue"><span class="led"></span>Pivot</button><button class="st grn" aria-label="Drop"><svg viewBox="0 0 16 16"><path d="M5 1h6v8h4l-7 6-7-6h4z" fill="#2f8a38"/></svg></button><output>Cursor: 0.09923, 0.0186</output></div>
</footer>
</div>

<footer class="taskbar">
<button class="win" aria-label="Start"><svg viewBox="0 0 24 24"><path d="M0 3l11-1v9H0zM12 2l12-2v11H12zM0 13h11v9L0 21zM12 13h12v11l-12-2z" fill="#fff"/></svg></button>
<label class="search"><span class="ring"></span><input type="text" placeholder="Type here to search" aria-label="Type here to search"><svg viewBox="0 0 20 30"><rect x="6" y="1" width="8" height="17" rx="4" fill="none" stroke="#222" stroke-width="2"/><path d="M2 13c0 12 16 12 16 0M10 22v6M6 28h8" fill="none" stroke="#222" stroke-width="2"/></svg></label>
<button class="tk view30" aria-label="Task view"><svg viewBox="0 0 32 32"><path d="M2 9h19v14H2zM2 3v3h19V3M2 29v-3h19v3M28 3v26" fill="none" stroke="#fff" stroke-width="2"/><path d="M26 10h4v4h-4z" fill="#fff"/></svg></button>
<button class="tk run" aria-label="Steam"><svg viewBox="0 0 40 40"><circle cx="20" cy="20" r="19" fill="#12203f"/><path d="M1 24c4 16 22 19 30 10 6-5 8-11 8-15z" fill="#0a6ba8"/><path d="M3 27l11 0 7-6c0 0 0-2 0-4" fill="none" stroke="#fff" stroke-width="6"/><circle cx="26" cy="14" r="6" fill="#12305f" stroke="#fff" stroke-width="3"/><circle cx="15" cy="28" r="4" fill="#0d5f98" stroke="#fff" stroke-width="2"/></svg></button>
<button class="tk run" aria-label="Chrome"><svg viewBox="0 0 40 40"><circle cx="20" cy="20" r="19" fill="#f7c92a"/><path d="M20 20L3 11a19 19 0 0 1 34 0z" fill="#dd4b39"/><path d="M20 20L3 11a19 19 0 0 0 15 28l8-14z" fill="#1da462"/><circle cx="20" cy="20" r="9" fill="#fff"/><circle cx="20" cy="20" r="7" fill="#4c8bf5"/></svg></button>
<button class="tk" aria-label="Resource Monitor"><svg viewBox="0 0 40 40"><path d="M5 12l6-4v24l-6-2z" fill="#999"/><path d="M11 7l26-3v24l-26 5z" fill="#eef4fa" stroke="#ccc"/><path d="M13 22l6-2 3-9 3 12 4-9 3 5 4-2" fill="none" stroke="#6ab0e0"/><path d="M2 30l16 2v5l-16-4z" fill="#ddd"/><circle cx="25" cy="33" r="5" fill="#ccc"/></svg></button>
<button class="tk run" aria-label="File Explorer"><svg viewBox="0 0 40 40"><path d="M2 4h14l3 4h19v27H2z" fill="#fbd66a"/><path d="M2 12h36v22H2z" fill="#ffe596"/><path d="M8 37V22h24v15h-7v-8H15v8z" fill="#3fa7dc"/></svg></button>
<button class="tk" aria-label="Spotify"><svg viewBox="0 0 40 40"><circle cx="20" cy="20" r="19" fill="#1ed760"/><g fill="none" stroke="#121212" stroke-linecap="round"><path d="M9 14c8-3 16-2 23 2" stroke-width="4"/><path d="M10 21c7-2 14-1 19 2" stroke-width="3"/><path d="M11 27c6-1 11-1 16 2" stroke-width="3"/></g></svg></button>
<button class="tk" aria-label="Grand Theft Auto IV"><svg viewBox="0 0 40 40"><rect x="3" y="3" width="34" height="34" rx="2" fill="#b8b8b4" stroke="#d8ac50" stroke-width="2"/><rect x="7" y="6" width="26" height="28" fill="#d6d6d2"/><path d="M11 11h4v18h-4zM18 11h4l3 10 2-10h4l-5 18h-4z" fill="#1c1c1c"/></svg></button>
<button class="tk" aria-label="paint.net"><svg viewBox="0 0 40 40"><path d="M1 1h30v38H1z" fill="#f4f4f4"/><path d="M3 4h26v24H3z" fill="#1c55a8"/><path d="M3 14c9-10 14 6 26-4v14H3z" fill="#a8cdf0"/><path d="M36 13L14 32" stroke="#c01a20" stroke-width="4"/><path d="M15 30l-7 7" stroke="#444" stroke-width="5"/></svg></button>
<button class="tk" aria-label="Discord"><svg viewBox="0 0 40 40"><path d="M7 3h27q3 0 3 3v33l-7-7H7q-3 0-3-3V6q0-3 3-3z" fill="#7289da"/><path d="M10 13c6-4 14-4 20 0 2 5 3 8 3 12l-6 3-2-3c-3 1-7 1-10 0l-2 3-6-3c0-4 1-7 3-12z" fill="#fff"/><circle cx="16" cy="20" r="2.500" fill="#7289da"/><circle cx="24" cy="20" r="2.500" fill="#7289da"/></svg></button>
<button class="tk" aria-label="OBS"><svg viewBox="0 0 40 40"><circle cx="20" cy="20" r="18" fill="#1e1d22" stroke="#ddd" stroke-width="2"/><path d="M20 20C11 17 13 9 17 6M20 20c7-6 13-1 14 5M20 20c2 9-6 12-12 8" fill="none" stroke="#c8c8cc" stroke-width="2"/></svg></button>
<button class="tk" aria-label="Video cloud"><svg viewBox="0 0 40 40"><circle cx="20" cy="20" r="19" fill="#86bc14"/><path d="M11 29c-8-1-7-11 0-11 1-9 15-10 17-1 8 0 8 12 0 12z" fill="#fff"/><path d="M15 16h10v11H15zM18 16v11M22 16v11M15 21h10" fill="none" stroke="#86bc14" stroke-width="1.500"/></svg></button>
<button class="tk" aria-label="ZModeler 2"><svg viewBox="0 0 40 40"><path d="M0 0h40v40H0z" fill="#ff9a00"/><path d="M12 10h23l-9 19h10v6H14z" fill="#7a4a10"/><path d="M6 6h23v6L16 26h13v6H5v-6l14-14H6z" fill="#2a1470" stroke="#d8d0e8" stroke-width="1.500"/></svg></button>
<button class="tk cur" aria-label="ZModeler 3"><svg viewBox="0 0 40 40"><path d="M12 0h20v6L22 20H5V7q0-7 7-7z" fill="#cf262c"/><path d="M34 13v20q0 7-7 7H7v-6l14-21z" fill="#1b4fae"/><path d="M13 12h14l8-2-15 24h-8l12-19-8 2-11 10z" fill="#8a8584"/></svg></button>
<button class="tk" aria-label="Xbox"><svg viewBox="0 0 40 40"><circle cx="18" cy="20" r="18" fill="#fff"/><path d="M6 6c10 0 20 14 24 28M30 6C20 6 10 20 6 34" fill="none" stroke="#1a1a1a" stroke-width="4"/></svg><span class="cnt">1</span></button>
<button class="tk" aria-label="Netflix"><svg viewBox="0 0 40 40"><path d="M0 0h40v40H0z" fill="#000"/><path d="M13 7h5l9 26h-5zM13 7h5v26h-5zM22 7h5v26h-5z" fill="#d8101c"/></svg></button>
<button class="tk run" aria-label="Vegas"><svg viewBox="0 0 40 40"><rect x="1" y="1" width="38" height="38" fill="#111c26" stroke="#1fb4f4" stroke-width="2"/><path d="M14 12l6 17 6-17" fill="none" stroke="#30b8f0" stroke-width="2.500"/></svg></button>
<button class="tk" aria-label="Photoshop"><span class="ps">Ps</span></button>
<button class="tk run" aria-label="Audacity"><svg viewBox="0 0 40 40"><path d="M5 28C2 0 38 0 35 28" fill="none" stroke="#1420a8" stroke-width="3"/><path d="M10 22l3-5 2 4 4-7 3 6 3-5 4 7v12l-4 5H14l-4-5z" fill="#fcc820"/><path d="M9 27l4-3 3 4 4-6 4 6 4-4 3 4-4 3H12z" fill="#f04818"/></svg></button>
<button class="tk run" aria-label="WinRAR"><svg viewBox="0 0 40 40"><path d="M4 6l30-2v9H4z" fill="#a04a98"/><path d="M4 15h31v8H4z" fill="#2148c8"/><path d="M4 25h31v8H4z" fill="#2a9a30"/><path d="M4 6v27M7 6v27" stroke="#eee" stroke-width="2"/><path d="M22 4h6v29h-6z" fill="#8a6a38"/><path d="M22 15h7v8h-7z" fill="#d8c890"/></svg></button>
<div class="tray"><svg class="t28"><use href="#people"/></svg><svg class="t20" viewBox="0 0 20 20"><path d="M1 15l9-10 9 10" fill="none" stroke="#fff" stroke-width="2"/></svg><svg class="t28" viewBox="0 0 28 28"><path d="M6 21c-8-1-6-9 0-9 1-8 12-8 13-2 7 0 8 11 2 11z" fill="#ddd"/><path d="M10 24c-6-1-5-8 1-8 1-6 9-6 10 0 8 0 8 8 2 8z" fill="#fff" stroke="#111"/></svg><svg class="t28" viewBox="0 0 28 28"><path d="M2 10h4l5-6v20l-5-6H2zM16 10q3 4 0 8M20 7q5 7 0 14M23 4q7 10 0 20" fill="none" stroke="#fff" stroke-width="2"/></svg>
<time>5:06 PM<br>12/23/2018</time>
<button class="note" aria-label="Notifications"><svg viewBox="0 0 28 28"><path d="M0 1h28v22H13l-4 5v-5H0z" fill="#fff"/><path d="M6 8h16M6 12h16M6 17h16" stroke="#111" stroke-width="2"/></svg><span class="cnt">32</span></button><span class="peek"></span></div>
</footer>

<div class="dialog" role="dialog" aria-label="Edit UV Mapping">
<header><h2>Edit UV Mapping</h2><button aria-label="Close">×</button></header>
<form class="dbody">
<div class="drow1"><svg viewBox="0 0 32 32"><path d="M4 5h7v7H4zM0 14h6v7H0zM11 12h6v7h-6zM2 24h6v7H2zM12 3h5v6h-5z" fill="#fff"/><path d="M8 0h5v5H8zM6 14h5v7H6zM9 22h5v7H9z" fill="#111"/><path d="M15 19l5 9L31 15" fill="none" stroke="#22a044" stroke-width="4"/></svg><label for="ch">Edit UV Channel map #</label><div class="num"><input id="ch" type="text" value="1"><span class="spin"><i class="su"></i><i class="sd"></i></span></div></div>
<fieldset class="fs1"><legend>Vertices with UV mapping:</legend>
<label><input type="radio" name="v">Keep old mapping</label>
<label class="dis in2"><input type="checkbox" disabled>Disable old mapping</label>
<label><input type="radio" name="v" checked>Generate New</label></fieldset>
<fieldset class="fs2"><legend>New mapping creation as:</legend>
<label><input type="checkbox" checked>Continuous mesh surface</label>
<label><input type="checkbox" checked>Ignore hidden geometry</label>
<label><input type="radio" name="m">From world XYZ</label>
<label><input type="radio" name="m" checked>From viewport XY</label>
<div class="copy"><label><input type="radio" name="m">Copy from channel #</label><div class="num off"><input type="text" value="1" disabled aria-label="Source channel"><span class="spin"><i class="su"></i><i class="sd"></i></span></div></div>
<label class="un"><input type="radio" name="m">Unwrap</label>
<label class="dis in1 un"><input type="checkbox" disabled>Pin border points</label>
<label class="dis in1"><input type="checkbox" disabled>Pin inner points</label></fieldset>
<label class="force"><input type="checkbox">Force mapping onto material</label>
<div class="combo mat"><select aria-label="Material"><option>Bodyshell [PAINT:1]</option></select></div>
<div class="dbtns"><button type="button" class="ok">OK</button><button type="button">Cancel</button></div>
</form></div>
</div>
</body>
</html>
```
FILE: styles.css
```css
* { box-sizing: border-box; }
body { margin: 0; font: 18px/24px "Open Sans", "Noto Sans", sans-serif; color: #dcdcdc; background: #2a2a2a; }
button { font: inherit; color: inherit; background: none; border: 0; padding: 0; margin: 0; }
h1, h2, p { margin: 0; font-weight: 400; }
svg { display: block; }
.defs { position: absolute; width: 0; height: 0; }
.i24 { width: 24px; height: 28px; }
.app { position: relative; display: flex; flex-direction: column; min-height: 100vh; overflow: hidden; }

.titlebar { display: flex; align-items: center; gap: 9px; height: 40px; padding: 2px 0 0 3px; background: #fff; color: #909090; }
.titlebar h1 { flex: 1; font-size: 20px; }
.winctl { display: flex; margin-right: 3px; }
.winctl button { width: 80px; height: 38px; display: grid; place-items: center; }
.winctl svg { width: 16px; height: 16px; fill: none; stroke: #a0a0a0; }

.work { position: relative; flex: 1; display: grid; grid-template: 80px 1fr 126px / 1fr 593px; background: linear-gradient(#2b2b2b, #222 94%, #202020); }
.work::before { content: ""; position: absolute; top: 0; bottom: 0; left: 0; width: 160px; background: linear-gradient(90deg, #2f3b52, #39445a); clip-path: polygon(0 0, 100% 0, 60% 100%, 0 100%); }
.work > * { position: relative; min-width: 0; }
.toolbars { grid-column: 1 / 3; display: flex; align-items: flex-start; background: linear-gradient(#4c6594, #33415c 15px, transparent 16px); }
.tg { display: flex; align-items: center; height: 44px; padding: 0 5px 0 8px; margin-right: 2px; border-right: 1px solid #1d2430; background: linear-gradient(rgba(120, 140, 180, .35), rgba(120, 130, 150, .3) 36%, rgba(140, 140, 140, .45) 38%, rgba(110, 110, 110, .4)); }
.menus { width: 241px; padding: 0 5px 0 18px; gap: 16px; }
.menus .tb { width: 26px; margin: 0 -1px; }
.tb { width: 40px; height: 40px; display: grid; place-items: center; }
.tb svg { width: 26px; height: 28px; }
.tb.on { background: linear-gradient(#d8bd7c, #b58526); border: 2px solid #3a2c10; border-radius: 3px; }
.dd, .more { height: 33px; position: relative; }
.dd { width: 15px; border-left: 1px solid #3a3a3a; }
.more { width: 15px; margin-top: 4px; border: 1px solid #5b6473; border-radius: 3px; background: linear-gradient(#3b4558, #33363c); }
.dd::after, .more::after, .tri-d { content: ""; display: inline-block; border: 5px solid transparent; border-top: 7px solid #f0f0f0; border-bottom: 0; }
.dd.black::after { border-top-color: #000; }
.more::after { margin-top: 16px; margin-left: -5px; margin-right: -5px; }
.combo { position: relative; }
.combo select { width: 100%; height: 100%; font: inherit; color: #111; background: #e1e1e1; border: 1px solid #adadad; padding: 0 4px; border-radius: 0; appearance: none; }
.combo::after { content: ""; position: absolute; right: 10px; top: 50%; width: 7px; height: 7px; margin-top: -6px; border: solid #444; border-width: 0 1px 1px 0; transform: rotate(45deg); }
.scr { width: 64px; height: 36px; margin: 0 4px 0 -2px; }
.tg.tall { height: 78px; gap: 6px; padding: 4px 6px 0 12px; background: linear-gradient(rgba(120, 140, 180, .3), rgba(100, 100, 100, .15)); border: 0; }
.tbtall { width: 33px; height: 72px; display: grid; place-items: center; border: 1px solid #667082; border-radius: 4px; background: linear-gradient(#465471, #2b2c30); }
.tbtall svg { width: 26px; height: 28px; }
.tri-r { border: 8px solid transparent; border-left: 9px solid #eee; border-right: 0; }
.tri-l { border: 8px solid transparent; border-right: 8px solid #eee; border-left: 0; }
.tri-u { border: 8px solid transparent; border-bottom: 9px solid #eee; border-top: 0; }

.center { display: flex; flex-direction: column; padding-right: 5px; }
.cmdbar { display: flex; height: 199px; }
.vstrip { width: 38px; flex: none; display: flex; flex-direction: column; align-items: center; gap: 4px; padding: 2px 0; overflow: hidden; background: linear-gradient(90deg, #364156, #2b3140); }
.sq { width: 23px; height: 23px; flex: none; display: grid; place-items: center; border: 2px solid #14181f; outline: 1px solid #66738c; outline-offset: -1px; border-radius: 3px; background: linear-gradient(#56698f, #272b33); }
.sq svg { width: 16px; height: 16px; fill: none; stroke: #e8e8e8; stroke-width: 2; }
.vtext { writing-mode: vertical-rl; font: 19px/24px "DejaVu Sans", sans-serif; white-space: nowrap; overflow: hidden; flex: 1; min-height: 0; }
.cmdmain { flex: 1; display: flex; flex-direction: column; }
.tabrow { display: flex; height: 36px; align-items: flex-start; }
.mbtn { height: 29px; padding: 0 8px; line-height: 29px; border-bottom: 1px solid #6d87b5; background: linear-gradient(#5a719c, #43547a 50%, #38445c 52%); white-space: nowrap; width: 117px; }
.mbtn.right { width: 130px; margin-left: auto; padding: 0 6px; background: linear-gradient(#5a74a8, #4a5f8a 50%, #3c4a68 52%); }
.tabs { display: flex; align-items: flex-end; height: 36px; }
.tabrow .tabs { margin-left: 26px; }
.tabrow .tab { font-size: 19px; }
.tab { height: 34px; padding: 0 20px; line-height: 38px; border-top: 1px solid #7488a8; border-right: 1px solid #3f4b60; background: linear-gradient(#3d4a62, #333c4c 45%, #2c2f35 47%, #2a2a2a); text-shadow: 1px 1px 1px #000; }
.tab.sel { height: 36px; background: linear-gradient(#4e6694, #3f4f6e 45%, #3a455a 47%, #3a4558); }
.cmdpanel { display: flex; gap: 7px; margin: 0 8px 15px 10px; padding: 8px 8px 0 7px; height: 147px; border: 1px solid #39465c; align-items: flex-start; }
.cmd { position: relative; display: flex; flex-direction: column; align-items: center; justify-content: space-between; width: 71px; height: 108px; padding: 13px 0 12px; border: 1px solid #3e4b63; outline: 1px solid #191919; border-radius: 3px; background: linear-gradient(rgba(72, 90, 124, .75), rgba(62, 74, 98, .65) 48%, rgba(48, 54, 66, .6) 50%, rgba(38, 38, 40, .5)); }
.cmd.wide { width: 110px; }
.ci { width: 32px; height: 32px; }
.cmd:not(.sm) .ci { width: 30px; }
.pop { position: absolute; top: 3px; right: 2px; width: 21px; height: 21px; }
.submesh { width: 737px; height: 109px; border: 1px solid #56627a; background: #262931; }
.subhead { display: flex; align-items: center; height: 26px; padding-left: 7px; background: linear-gradient(#6d86b6, #586a90); }
.subt { flex: 1; text-align: center; padding-right: 8px; }
.subrow { display: flex; gap: 7px; padding: 5px 4px; }
.cmd.sm { height: 70px; padding: 20px 0 0; }

.views { flex: 1; display: grid; grid-template: 825fr 722fr / 1638fr 1595fr; gap: 5px 6px; padding-left: 1px; }
.view { display: flex; flex-direction: column; min-width: 0; min-height: 0; }
.vhead, .uvfoot { display: flex; align-items: center; height: 36px; flex: none; border-top: 2px solid #63789a; background: linear-gradient(#4e6795, #3d4d6b 48%, #313845 50%, #25272b); }
.vhead { font-size: 19px; }
.vname { height: 32px; margin-left: 2px; padding: 0 3px; font-size: 20px; font-weight: 700; border: 1px solid #8d9ab0; background: linear-gradient(165deg, #7f93b4, #485a7c 35%, #303744 60%, #282a30); }
.vmenu { display: flex; align-items: center; gap: 9px; margin-left: 12px; flex: 1; }
.vmenu .tri-l { margin-right: 4px; }
.vicons { display: flex; align-items: center; gap: 5px; width: 208px; height: 31px; padding: 0 9px; margin-right: 6px; border: 1px solid #8190a8; }
.vicons svg { width: 24px; height: 24px; }
.vtools { display: flex; gap: 3px; align-items: center; margin-right: 7px; }
.vb { display: flex; align-items: center; height: 30px; gap: 6px; padding: 0 4px 0 3px; border: 1px solid #7d8ca6; border-left-color: #5a6a86; background: linear-gradient(160deg, #8798b6, #4a5d80 30%, #303846 58%, #282b31); }
.vtools .vb { font-size: 18px; }
.vb svg { width: 24px; height: 24px; }
.vb.vz { gap: 11px; }
.vb.vmax { width: 32px; margin-left: 3px; height: 32px; }
.vb.drop { width: 26px; justify-content: center; margin-right: 6px; padding: 0; }
.canvas { position: relative; flex: 1; min-height: 0; background: #c9c9c9; box-shadow: inset 0 0 8px #888; overflow: hidden; }
.scene { position: absolute; inset: 0; width: 100%; height: 100%; }
.platetext { font: 700 5px "Liberation Mono", monospace; fill: #8a8a95; }
.platetext .dim { fill: #4c4c58; }
.axis { font: 700 38px "Open Sans", sans-serif; }
.axl { position: absolute; left: 5px; bottom: 4px; font: 700 36px/36px "DejaVu Sans", sans-serif; color: #1f4dff; }
.axl.z { bottom: 7px; }
.axl.y { color: #0a8a14; }
.axl.wu { left: 6px; bottom: 0; font: 700 38px/40px "Liberation Sans", sans-serif; }
.axl.wu b + b { color: #f00; }
.uvbody { flex: 1; display: flex; min-height: 0; }
.uvtools { width: 187px; display: flex; flex-direction: column; gap: 4px; padding: 3px 4px 0 5px; background: linear-gradient(90deg, #4d6592, #364461 50%, #2a2f3a 51%, #242424); }
.ub { position: relative; height: 58px; flex: none; border: 2px solid #171c26; outline: 1px solid #5c6d8c; border-radius: 4px; padding-left: 38px; background: linear-gradient(#5e77a6, #42516f 48%, #303744 50%, #262626); }
.ub svg { position: absolute; left: 50%; top: 50%; width: 32px; height: 32px; margin: -16px 0 0 -16px; }
.ub span { position: relative; font-size: 19px; }
.canvas.uv { background: #dcdde0; }
.uvfoot { gap: 5px; padding-left: 3px; }
.uvfoot .vb { gap: 25px; }
.bold { font-weight: 700; }
.swatch { width: 26px; height: 26px; background: #000; margin-right: -12px; }
.uvfoot .vb:nth-child(3) { gap: 20px; }

.messages { display: flex; height: 93px; padding-top: 5px; }
.msgbox { flex: 1; background: linear-gradient(#c4c4c4, #999); border: 1px solid #63789a; border-width: 0 1px 1px 0; }
.msgbox p { display: flex; align-items: center; gap: 14px; height: 35px; padding: 3px 0 0 22px; font-size: 20px; color: #4a3c14; border-bottom: 2px solid #7a6010; background: linear-gradient(#fbd980, #f6e8b4 48%, #edc54a 50%, #b89228); }
.info { width: 16px; height: 16px; border-radius: 50%; background: #2b62c0; color: #fff; font: 700 12px/16px "Liberation Serif", serif; text-align: center; }

.side { display: flex; flex-direction: column; min-height: 0; }
.sidetitle { display: flex; align-items: center; justify-content: space-between; height: 38px; padding: 2px 3px 0 5px; font-size: 18px; background: linear-gradient(#3d485b, #333a47 50%, #27292d 52%, #262626); }
.sidetitle span { display: flex; gap: 1px; }
.sidebody { flex: 1002 0 9px; display: flex; flex-direction: column; padding: 1px 10px 10px; background: linear-gradient(#4c6594, #344460 15px, transparent 16px); position: relative; min-height: 0; }
.sidebody::before { content: ""; position: absolute; inset: 0 auto 0 0; width: 158px; background: linear-gradient(90deg, #38455d, #3a4456); clip-path: polygon(0 0, 100% 0, 76% 100%, 0 100%); }
.sidebody > * { position: relative; }
.sidebody .tab { padding: 0 12px 0 11px; }
.struct { flex: 1; display: flex; flex-direction: column; gap: 4px; border: 1px solid #44536e; padding: 11px 7px 10px 4px; min-height: 0; }
.row { display: flex; gap: 6px; flex: none; }
.sb { height: 33px; padding: 0; line-height: 30px; text-align: center; border: 1px solid #161b25; outline: 1px solid #6b7a96; outline-offset: 0; border-radius: 2px; background: linear-gradient(#7088ba, #4b5f8b 45%, #313b50 48%, #23262b); text-shadow: 1px 1px 1px #111; color: #e6e6e6; white-space: nowrap; }
.sb.act { background: linear-gradient(#c78812, #cf9d34 45%, #cfa849 48%, #d0aa50); color: #33290f; outline-color: #8a7440; text-shadow: none; }
.sb:disabled { background: linear-gradient(rgba(112, 136, 186, .5), rgba(75, 95, 139, .5) 45%, rgba(49, 59, 80, .5) 48%, rgba(35, 38, 43, .5)); color: #15181d; outline-color: #3e495c; text-shadow: none; }
.w1 { width: 42px; } .w2 { width: 58px; } .w3 { width: 90px; } .w4 { width: 122px; } .w5 { width: 106px; } .w6 { width: 138px; } .w7 { width: 74px; } .w8 { width: 282px; }
.split { display: flex; align-items: center; }
.split span { flex: 1; border-right: 1px solid #1c222c; }
.split i { margin: 0 6px; }
.sep { display: flex; align-items: center; gap: 3px; height: 33px; color: #474a50; padding: 3px 16px 0 5px; line-height: 30px; }
.sep::before, .sep::after { content: ""; flex: 1; height: 1px; margin-bottom: 5px; background: linear-gradient(90deg, transparent, #4a6492); }
.sep::after { background: linear-gradient(90deg, #4a6492, transparent); }
.strip { gap: 0; padding-right: 5px; }
.strip span { flex: 1; border: 1px solid #303b4e; background: linear-gradient(#39414e, #2e343f 50%, #26282c 52%); }
.lockb { width: 32px; padding-left: 3px; }
.big { height: 70px; display: flex; align-items: center; gap: 2px; padding: 4px 0 0 4px; }
.big svg { width: 54px; height: 50px; }
.mini { width: 122px; display: flex; flex-wrap: wrap; gap: 4px 6px; }
.well { flex: 1; margin: 4px 0 0 3px; border: 1px solid #555; background: linear-gradient(#e8e8e0, #d8d8d2 19px, #cacaca 20px, #989898); }
.splitter { height: 14px; flex: none; margin: 0 1px; border: 2px solid #2b3547; background: linear-gradient(#4e6490, #2b3140 50%, #3a465c); }
.nodes { flex: 744 0 0; min-height: 0; background: linear-gradient(#e8e8e0, #d8d8d2 19px, #cacaca 20px, #999); color: #3c3c3c; border-bottom: 2px solid #63789a; }
.nodes label { display: flex; align-items: center; height: 38px; padding-left: 2px; font-size: 20px; }
.plus { width: 9px; height: 9px; border: 1px solid #999; background: #fff; font-size: 9px; line-height: 7px; text-align: center; margin: -14px 13px 0 0; color: #222; }
.nodes input { appearance: none; width: 12px; height: 12px; margin: -14px 13px 0 0; border: 1px solid #888; background: #fff; display: grid; place-items: center; }
.nodes input::before { content: ""; width: 4px; height: 8px; border: solid #2a66d8; border-width: 0 2px 2px 0; transform: rotate(40deg) translateY(-1px); }
.sidefoot { display: flex; align-items: center; height: 46px; flex: none; padding: 0 0 4px 22px; margin-left: 8px; background: linear-gradient(#585858, #474747); box-shadow: inset 0 0 6px #222; }
.sidefoot button { display: flex; align-items: center; width: 123px; }
.sidefoot svg { width: 16px; height: 18px; margin-right: -5px; }
.sidefoot .off { width: 108px; color: #0c0c0c; }
.sidefoot .off svg { margin-right: -12px; }
.sidefoot .hide { width: 101px; }
.sidefoot .ic { width: 40px; justify-content: center; position: relative; }
.sidefoot .ic svg { margin: 0; }
.r1::after { content: ""; position: absolute; left: 17px; top: 3px; width: 7px; height: 7px; background: #e33; }

.bottom { grid-column: 1 / 3; display: flex; align-items: flex-start; padding-top: 3px; background: linear-gradient(transparent 106px, rgba(20, 20, 20, .6) 107px); }
.player { margin-left: 10px; width: 191px; height: 87px; display: grid; grid-template: 43px 13px 31px / 32px 28px 70px 28px 33px; color: #080808; }
.pb { display: grid; place-items: center; border: 1px solid #202838; outline: 1px solid #5b6a86; outline-offset: -2px; background: linear-gradient(#566a90, #3c4960 48%, #2c3340 50%, #272a30); overflow: hidden; }
.pb svg { width: 14px; height: 14px; }
.a { grid-area: 1 / 1; } .b { grid-area: 1 / 2 / 3 / 5; font-weight: 700; } .c { grid-area: 1 / 5; } .d { grid-area: 2 / 1 / 4 / 2; } .e { grid-area: 3 / 2; } .f { grid-area: 3 / 3; font-weight: 700; } .g { grid-area: 3 / 4; } .h { grid-area: 2 / 5 / 4 / 6; }
.tracks { width: 226px; height: 90px; padding: 0 7px 0 12px; background: #4c4c4c; border-right: 1px solid #2c3240; }
.tracks .combo { width: 204px; height: 36px; }
.trow { display: flex; gap: 4px; margin-top: 7px; }
.te { display: flex; align-items: center; gap: 9px; width: 143px; height: 43px; padding: 2px 5px; }
.te svg { width: 16px; height: 16px; }
.mk { width: 28px; height: 43px; display: grid; place-items: center; background: #484848; border: 1px solid #3a3a3a; }
.mk svg { width: 16px; height: 16px; }
.timeline { width: 840px; height: 88px; margin-left: 8px; background: linear-gradient(#454545, #505050 80%, #3c3c3c); }
.ruler { width: 840px; height: 56px; background: linear-gradient(#1b1b1b, #333 12px, #303030 50px, #111); font-size: 18px; fill: #5f6266; }
.status { margin-left: auto; align-self: flex-end; display: flex; align-items: center; gap: 4px; width: 504px; overflow: hidden; }
.st { height: 32px; border: 2px solid #141414; border-radius: 3px; font-weight: 700; flex: none; display: flex; align-items: center; justify-content: center; gap: 4px; }
.red { width: 104px; background: linear-gradient(#7c1820, #8c1c26 45%, #9c2636); }
.gold { width: 53px; background: linear-gradient(#c88a10, #c8a040 48%, #d0a848); color: #222a38; }
.blue { width: 93px; background: linear-gradient(#5a74a8, #485a80 48%, #38455c); }
.grn { width: 34px; background: linear-gradient(#3c4658, #2e2e28); }
.grn svg { width: 14px; height: 14px; }
.led { width: 24px; height: 24px; border-radius: 50%; background: radial-gradient(#ff2020, #f01010 60%, #901820); }
.status output { white-space: nowrap; padding-top: 2px; }

.taskbar { display: flex; height: 70px; flex: none; background: linear-gradient(90deg, #0c1114 0, #0c1114 680px, #38280f 700px, #3a2a10 1130px, #16191a 1260px, #241b12 1420px, #101315 1500px, #2a1e12 1600px, #14171a 2500px, #0b0f12 3200px, #17130f 3500px, #101010); }
.win { width: 84px; display: grid; place-items: center; }
.win svg { width: 24px; height: 24px; }
.search { display: flex; align-items: center; width: 602px; padding: 0 26px 0 17px; background: #f2f2f2; }
.ring { width: 42px; height: 42px; border: 5px solid #000; border-radius: 50%; outline: 2px solid #777; outline-offset: -1px; background: #fff; }
.search input { flex: 1; font: inherit; font-size: 23px; border: 0; background: none; padding: 2px 0 0; margin-left: 17px; }
.search input::placeholder { color: #3c3c3c; opacity: 1; }
.search svg { width: 20px; height: 30px; }
.tk { position: relative; width: 87px; display: grid; place-items: center; }
.tk svg { width: 40px; height: 40px; }
.tk.view30 svg { width: 30px; height: 30px; }
.tk.run::after, .tk.cur::after { content: ""; position: absolute; bottom: 0; left: 8px; right: 8px; height: 4px; background: #b0aeac; }
.tk.cur { background: #575350; }
.tk.cur::after { left: 0; right: 0; }
.cnt { position: absolute; right: 9px; bottom: 7px; width: 28px; height: 28px; border-radius: 50%; border: 1px solid #999; background: #262626; color: #fff; font-size: 18px; font-weight: 600; line-height: 26px; text-align: center; }
.ps { width: 38px; height: 38px; border: 2px solid #00c8ff; background: #001d26; color: #00c8ff; font-size: 20px; line-height: 34px; font-weight: 600; }
.tray { margin-left: auto; display: flex; align-items: center; color: #fff; }
.t28 { width: 28px; height: 28px; }
.t20 { width: 20px; height: 20px; margin: 0 18px 0 38px; }
.t28 + .t28 { margin-left: 14px; }
.tray time { font-size: 19px; line-height: 33px; width: 106px; margin: 0 40px 0 4px; padding-top: 2px; text-align: center; }
.note { position: relative; width: 28px; height: 28px; }
.note svg { width: 28px; height: 28px; }
.note .cnt { right: -17px; bottom: -20px; width: 34px; height: 30px; line-height: 28px; border-radius: 15px; }
.peek { width: 1px; height: 70px; margin: 0 8px 0 33px; background: #888; }

.dialog { position: absolute; left: 1961px; top: 213px; width: 989px; height: 1237px; display: flex; flex-direction: column; font: 19px/22px "Liberation Sans", Arial, sans-serif; color: #f0f0f0; box-shadow: 0 2px 16px rgba(0, 0, 0, .5); }
.dialog > header { display: flex; justify-content: space-between; align-items: center; height: 51px; flex: none; background: #fff; color: #111; padding: 0 1px 0 12px; }
.dialog h2 { font: 20px/26px "Open Sans", sans-serif; padding-top: 2px; }
.dialog header button { width: 35px; height: 35px; margin-top: 6px; background: #c75050; color: #fff; font-weight: 700; }
.dbody { position: relative; flex: 1; display: flex; flex-direction: column; padding: 4px 10px 6px 5px; background: linear-gradient(#4c6594, #33415c 15px, #2a2a2a 16px, #212121 1165px, #171717 1167px); }
.dbody::before { content: ""; position: absolute; inset: 0 auto 0 0; width: 160px; background: linear-gradient(90deg, #3a4760, #384256 70%, #343c4c); clip-path: polygon(0 0, 100% 0, 60% 100%, 0 100%); }
.dbody::after { content: ""; position: absolute; inset: 0 0 auto 0; height: 15px; background: linear-gradient(#4c6594, rgba(60, 78, 110, .6)); }
.dbody > * { position: relative; z-index: 1; }
.dbody::before, .dbody::after { z-index: 0; }
.drow1 { display: flex; align-items: flex-start; height: 65px; padding-left: 4px; flex: none; }
.drow1 svg { width: 31px; height: 31px; }
.drow1 label { margin-left: auto; margin-top: 21px; color: #c8c8c8; }
.num { position: relative; display: flex; width: 366px; height: 31px; border-top: 1px solid #161616; border-left: 1px solid #161616; border-bottom: 1px solid #51688c; }
.drow1 .num { margin: 15px 4px 0 10px; }
.num input { width: 100%; border: 0; background: none; color: #fff; font: 20px "Liberation Sans", sans-serif; text-align: right; padding: 0 17px 4px 0; }
.num.off { width: 376px; } .num.off input { color: #5c5c5c; }
.spin { position: absolute; right: 0; top: 0; bottom: 0; width: 15px; background: #f0f0f0; border: 1px solid #999; display: flex; flex-direction: column; justify-content: space-around; align-items: center; }
.su, .sd { border: 5px solid transparent; border-bottom: 6px solid #111; border-top: 0; }
.sd { border-bottom: 0; border-top: 6px solid #111; }
.off .su { border-bottom-color: #777; } .off .sd { border-top-color: #777; }
fieldset { margin: 0; min-width: 0; padding: 0 12px; border: 1px solid #51688c; border-top-color: #7e92b2; flex: none; }
.fs1 { height: 137px; margin-bottom: 4px; } .fs2 { height: 338px; }
legend { margin: 0 0 0 39%; padding: 0; height: 16px; line-height: 24px; text-shadow: 1px 1px 1px #000; }
.dbody > fieldset label, .copy label, .force { display: flex; align-items: center; gap: 8px; height: 33px; }
.dbody > .fs1 label { height: 35px; }
.fs1 legend { margin-bottom: 9px; } .fs2 legend { margin-bottom: 10px; }
.dbody > fieldset .un { height: 36px; }
.in2 { padding-left: 34px; } .in1 { padding-left: 26px; }
.dis { color: #8c8c8c; }
.dialog input[type=radio], .dialog input[type=checkbox] { appearance: none; width: 19px; height: 19px; margin: 0; flex: none; background: #fff; display: grid; place-items: center; border: 1px solid #ddd; }
.dialog input[type=radio] { border-radius: 50%; }
.dialog input[type=radio]:checked::before { content: ""; width: 9px; height: 9px; border-radius: 50%; background: #222; }
.dialog input[type=checkbox]:checked::before { content: ""; width: 6px; height: 12px; margin-top: -3px; border: solid #222; border-width: 0 2px 2px 0; transform: rotate(42deg); }
.copy { display: flex; justify-content: space-between; align-items: center; padding-right: 14px; }
.force { padding-left: 13px; margin-top: 7px; flex: none; }
.mat { height: 32px; margin: 3px 0 0 9px; font-size: 19px; flex: none; }
.mat select { padding: 0; }
.dbtns { margin-top: auto; display: flex; justify-content: flex-end; gap: 8px; padding-right: 17px; }
.dbtns button { width: 257px; height: 40px; background: #e1e1e1; border: 1px solid #adadad; color: #000; }
.dbtns .ok { border: 2px solid #0078d7; }
```
